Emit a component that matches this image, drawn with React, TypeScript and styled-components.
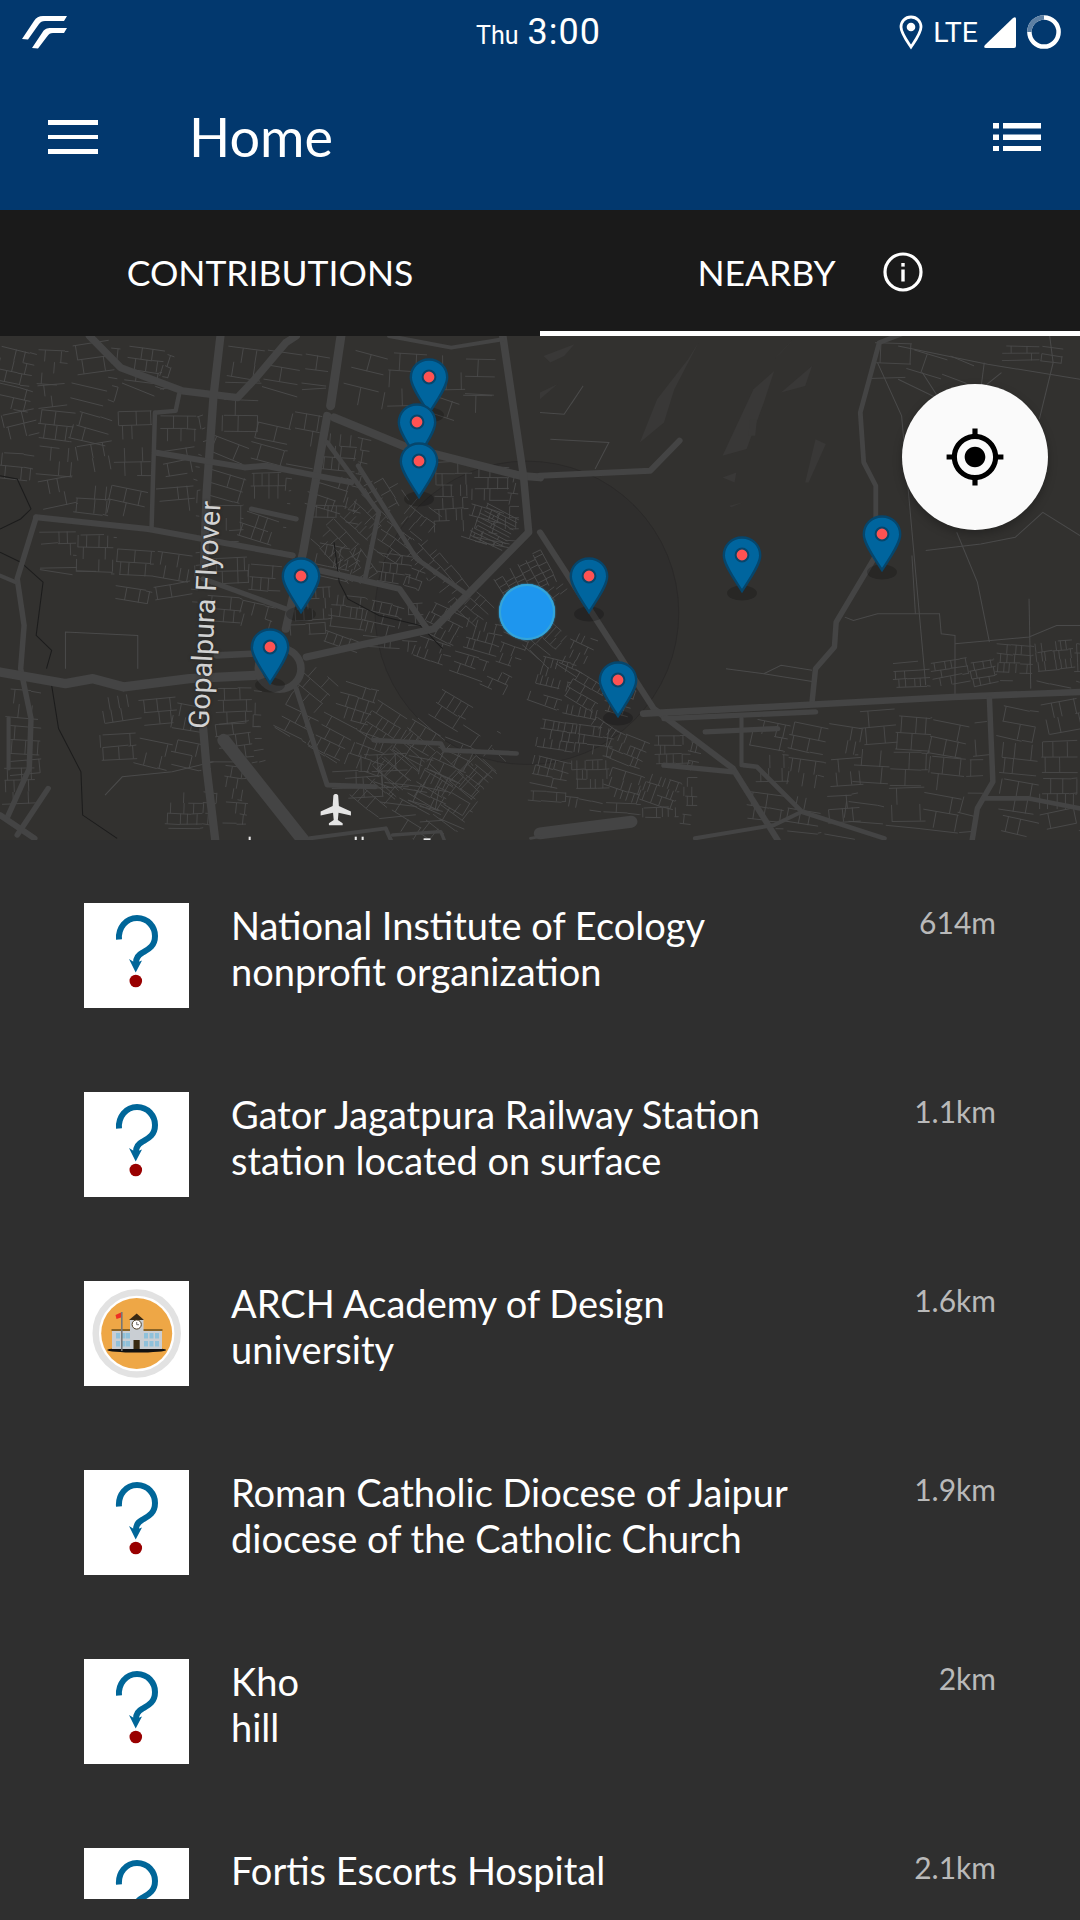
import React from "react"
import styled, { createGlobalStyle } from "styled-components"

const Global = createGlobalStyle`
  html, body { margin: 0; padding: 0; background: #2f2f2f; }
  body { font-family: Lato, Roboto, sans-serif; }
`

type Place = { name: string; kind?: string; dist: string; school?: boolean }

const places: Place[] = [
  { name: "National Institute of Ecology", kind: "nonprofit organization", dist: "614m" },
  { name: "Gator Jagatpura Railway Station", kind: "station located on surface", dist: "1.1km" },
  { name: "ARCH Academy of Design", kind: "university", dist: "1.6km", school: true },
  { name: "Roman Catholic Diocese of Jaipur", kind: "diocese of the Catholic Church", dist: "1.9km" },
  { name: "Kho", kind: "hill", dist: "2km" },
  { name: "Fortis Escorts Hospital", dist: "2.1km" },
]

// pin head centre x and top y, relative to the map
const pins = [
  { x: 429, y: 22 },
  { x: 417, y: 67 },
  { x: 419, y: 106 },
  { x: 301, y: 221 },
  { x: 270, y: 292 },
  { x: 589, y: 221 },
  { x: 618, y: 325 },
  { x: 742, y: 200 },
  { x: 882, y: 179 },
]

// map is drawn in zoom space: 2.904 units per px across, 3 per px down
const R = 1568
const mainRoads: [number, string][] = [
  [22, "260,0 350,95 530,165 690,185 740,130 830,20 860,0"],
  [24, "640,0 620,180 600,470 592,700"],
  [24, "590,1180 600,1300 625,1515"],
  [26, "990,0 960,210"],
  [24, "950,240 880,650 830,880"],
  [24, "970,245 1170,330 1510,420 1568,425"],
  [22, "1460,0 1520,420 1535,590 1260,880 890,965"],
  [12, "1130,0 1310,35 1460,10"],
  [18, "105,545 430,580 850,660"],
  [18, "930,705 1160,760 1240,880"],
  [18, "450,350 710,395 770,390 1020,440"],
  [13, "450,230 440,580"],
  [13, "520,175 510,225 455,230"],
  [14, "950,320 1100,530 1060,730"],
  [14, "1040,390 1210,670 1360,780"],
  [16, "105,545 50,730 70,870 60,1000 90,1150 85,1300 20,1450"],
  [28, "0,1010 190,1045 270,1030 360,1055 550,1030 740,1020"],
  [20, "630,960 730,955"],
  [15, "860,1060 950,1350 1090,1355"],
  [15, "590,730 830,820"],
  [12, "0,720 45,740"],
  [18, "0,1440 100,1510"],
  [38, "650,1215 880,1515"],
  [14, "1085,1215 1280,1225 1290,1245 1500,1255"],
  [15, "730,520 860,550"],
  [12, "900,1510 1120,1480 1135,1515"],
  [10, "1140,1500 1280,1490 1290,1515"],
  [12, "25,1150 25,1300"],
  [16, "140,1360 50,1500"],
  [18, `${R},420 ${R + 320},405 ${R + 405},315`],
  [18, `${R},590 ${R + 330},1120 ${R + 560},1300 ${R + 690},1515`],
  [14, `${R + 1060},-10 ${R + 985},20 ${R + 930},230 ${R + 940},380 ${R + 975},450 ${R + 975},560`],
  [16, `${R + 975},660 ${R + 860},860 ${R + 855},935 ${R + 800},1000 ${R + 790},1100`],
  [20, `${R + 300},1135 ${R + 1200},1085 ${R + 1568},1070`],
  [16, `${R + 360},1150 ${R + 800},1130`],
  [16, `${R + 480},1190 ${R + 690},1180`],
  [12, `${R + 585},1150 ${R + 585},1290`],
  [16, `${R + 360},1290 ${R + 560},1310`],
  [14, `${R + 590},1290 ${R + 630},1295 ${R + 760},1430 ${R + 1000},1510`],
  [16, `${R + 1305},1090 ${R + 1315},1340 ${R + 1270},1420 ${R + 1255},1515`],
  [14, `${R + 1290},1390 ${R + 1420},1390 ${R + 1568},1420`],
  [36, `${R},1495 ${R + 265},1460`],
  [12, `${R + 450},1510 ${R + 680},1470 ${R + 760},1430`],
  [8, "1540,1510 1568,1505"],
]

const rivers = [
  "0,420 50,430 90,520 60,550 0,580",
  "0,650 60,680 125,740 105,900 150,945 135,1000",
  "150,1050 170,1180 235,1310 240,1440 340,1510",
  "970,620 985,740 1010,790 1100,840 1220,870 1285,940",
]

const thinLines = [
  "190,890 190,1000 190,890 400,900 400,1000",
  "305,1380 355,1325 500,1310 620,1280",
  `${R},230 ${R + 70},235 ${R + 125},150 ${R + 90},205`,
  `${R + 30},310 ${R + 200},320 ${R + 160},400`,
  `${R + 540},1000 ${R + 650},1015 ${R + 700},990 ${R + 790},1005`,
  `${R + 650},1015 ${R + 800},1040`,
  `${R + 980},80 ${R + 1050},240 ${R + 1120},1050`,
  `${R + 1080},660 ${R + 1090},835 ${R + 1160},835 ${R + 1165},895 ${R + 1205},900 ${R + 1205},1080`,
  `${R + 885},845 ${R + 910},855 ${R + 980},835 ${R + 1090},835`,
  `${R + 1120},645 ${R + 1280},625 ${R + 1380},605 ${R + 1460},530 ${R + 1568},600`,
  `${R + 1040},30 ${R + 1300},85 ${R + 1568},130`,
  `${R + 1210},590 ${R + 1270},740 ${R + 1305},920`,
  `${R + 1420},790 ${R + 1425},1060`,
  `${R + 1480},0 ${R + 1490},80 ${R + 1450},250`,
  `${R + 1205},925 ${R + 1420},905 ${R + 1500},870 ${R + 1568},870`,
  `${R + 1110},110 ${R + 1160},190 ${R + 1040},130`,
  `${R + 1290},80 ${R + 1280},160 ${R + 1340},110`,
]

// x, y, width, height, angle, row step, cross step
const patches: number[][] = [
  [0, 30, 200, 180, 6, 34, 34], [210, 30, 140, 190, 3, 44, 52], [370, 30, 140, 125, 12, 34, 30],
  [660, 30, 300, 130, 6, 44, 60], [1020, 40, 420, 170, 5, 52, 64], [640, 190, 300, 170, 10, 48, 60],
  [460, 240, 130, 320, 2, 38, 36], [110, 220, 330, 320, 2, 42, 38], [0, 240, 100, 210, 0, 38, 36],
  [110, 590, 230, 140, 4, 36, 32], [340, 640, 240, 150, 3, 38, 36], [610, 400, 240, 240, 7, 38, 34],
  [610, 670, 210, 210, 8, 38, 32], [930, 290, 150, 290, 8, 36, 28], [920, 620, 140, 110, 8, 32, 26],
  [1130, 400, 210, 320, 48, 30, 24], [1260, 380, 260, 220, 6, 34, 26], [1230, 600, 300, 100, 48, 26, 20],
  [1410, 500, 110, 130, 20, 12, 60], [850, 760, 380, 170, 8, 32, 26], [1090, 650, 160, 110, 10, 28, 20],
  [1260, 800, 300, 180, 24, 30, 24], [900, 980, 640, 230, 30, 36, 28], [1280, 1060, 288, 430, 40, 42, 34],
  [960, 1260, 300, 100, 0, 50, 46], [20, 1060, 100, 300, 0, 42, 36], [290, 1090, 320, 220, 3, 38, 36],
  [620, 1060, 140, 240, 3, 36, 32], [480, 1370, 150, 130, 0, 32, 30], [650, 1290, 70, 190, 0, 32, 26],
  [1000, 1330, 300, 130, 6, 60, 70], [0, 1300, 100, 120, 0, 36, 36],
  [R, 640, 150, 180, 58, 26, 22], [R, 830, 190, 130, 30, 26, 22], [R, 960, 300, 140, 22, 28, 22],
  [R, 1150, 480, 260, 9, 28, 20], [R + 620, 1150, 320, 340, 4, 40, 36], [R + 920, 1130, 380, 340, 6, 50, 46],
  [R + 1020, 985, 300, 85, 0, 24, 24], [R + 1325, 925, 243, 135, 0, 28, 16], [R + 1340, 1110, 228, 380, 0, 46, 36],
  [R + 970, 20, 300, 130, 10, 60, 80], [R + 1340, 30, 180, 60, 0, 22, 70],
]

const hills = [
  `${R + 10},60 ${R + 100},25 ${R + 70},60 ${R + 30},80`,
  `${R + 290},320 ${R + 340},190 ${R + 430},70 ${R + 460},20 ${R + 390},160 ${R + 360},260`,
  `${R + 530},360 ${R + 620},160 ${R + 680},105 ${R + 650},200 ${R + 600},340`,
  `${R + 700},170 ${R + 790},90 ${R + 770},150`,
  `${R + 770},440 ${R + 800},310 ${R + 830},325 ${R + 780},440`,
  `${R + 680},70 ${R + 740},5 ${R + 700},50`,
  `${R},170 ${R + 50},145 ${R},190`,
  `${R + 530},425 ${R + 570},410 ${R + 565},440`,
  `${R + 550},510 ${R + 590},500 ${R + 555},515`,
  `${R + 610},250 ${R + 630},250 ${R + 625},300 ${R + 605},300`,
]

const makeRnd = (start: number) => {
  let seed = start * 97 + 13
  return () => {
    seed = (seed * 16807) % 2147483647
    return (seed % 1000) / 1000
  }
}

// one small block of lanes: broken rows with side lanes between them
const blockPath = (rnd: () => number, w: number, h: number, row: number, cross: number) => {
  let d = ""
  for (let y = 0; y <= h; y += row) {
    let x = rnd() * 14
    while (x < w) {
      const end = Math.min(w, x + cross * (1.5 + rnd() * 3))
      if (rnd() < 0.78) d += `M${x.toFixed(0)} ${y}L${end.toFixed(0)} ${(y + (rnd() - 0.5) * 6).toFixed(0)}`
      x = end
    }
    if (y + row <= h) {
      for (let c = rnd() * cross; c < w; c += cross * (0.6 + rnd() * 0.8)) {
        if (rnd() < 0.7) d += `M${c.toFixed(0)} ${y}V${y + row}`
      }
    }
  }
  return d
}

// patches are cut into small blocks, each turned a little, so the grid doesn't read as brickwork
const blocks = patches.flatMap(([x, y, w, h, a, row, cross], i) => {
  const rnd = makeRnd(i + 1)
  const out: { key: string; transform: string; d: string }[] = []
  const size = 110
  const rad = (a * Math.PI) / 180
  for (let v = 0; v < h; v += size) {
    for (let u = 0; u < w; u += size) {
      const bw = Math.min(size, w - u)
      const bh = Math.min(size, h - v)
      const px = x + u * Math.cos(rad) - v * Math.sin(rad)
      const py = y + u * Math.sin(rad) + v * Math.cos(rad)
      const turn = a + (rnd() - 0.5) * 26
      out.push({
        key: `${i}-${u}-${v}`,
        transform: `translate(${px.toFixed(0)} ${py.toFixed(0)}) rotate(${turn.toFixed(1)})`,
        d: blockPath(rnd, bw, bh, row, cross),
      })
    }
  }
  return out
})

const StreetMap = () => (
  <MapArt viewBox="0 0 3136 1515" preserveAspectRatio="none">
    <ellipse cx="1530" cy="832" rx="441" ry="456" fill="#2f2e2d" stroke="#282726" strokeWidth="2" />
    {hills.map((p, i) => (
      <polygon key={i} points={p} fill="#393837" />
    ))}
    {blocks.map(b => (
      <path key={b.key} transform={b.transform} d={b.d} fill="none" stroke="#4a4a4a" strokeWidth="2.6" />
    ))}
    {thinLines.map((p, i) => (
      <polyline key={i} points={p} fill="none" stroke="#4a4a4a" strokeWidth="3" />
    ))}
    {rivers.map((p, i) => (
      <polyline key={i} points={p} fill="none" stroke="#1c1c1c" strokeWidth="3" />
    ))}
    {mainRoads.map(([w, p], i) => (
      <polyline key={i} points={p} fill="none" stroke="#444" strokeWidth={w} strokeLinecap="round" strokeLinejoin="round" />
    ))}
    <circle cx="812" cy="1000" r="62" fill="#32312f" stroke="#444" strokeWidth="22" />
    <g transform="translate(975 1427)" fill="#e4e4e4">
      <path d="M-7 -46 C-3 -52 3 -52 7 -46 L9 -14 L44 2 L44 14 L8 6 L6 28 L20 38 L20 44 L-20 44 L-20 38 L-6 28 L-8 6 L-44 14 L-44 2 L-9 -14 Z" />
    </g>
    <g fill="#e8e8e8">
      <rect x="722" y="1505" width="6" height="10" />
      <rect x="1030" y="1505" width="6" height="10" />
      <rect x="1050" y="1505" width="6" height="10" />
      <rect x="1230" y="1510" width="20" height="5" />
    </g>
  </MapArt>
)

const Pin = ({ x, y }: { x: number; y: number }) => (
  <PinMark style={{ left: x - 20, top: y }} viewBox="0 0 40 66" width="40" height="66">
    <ellipse cx="20" cy="57" rx="15" ry="7.500" fill="#000" opacity=".2" />
    <path
      d="M20 1.5 C9.5 1.5 1.8 9.5 1.8 19.5 C1.8 29 13 44 20 55 C27 44 38.2 29 38.2 19.5 C38.2 9.5 30.5 1.5 20 1.5 Z"
      fill="#00659e"
      stroke="#06466c"
      strokeWidth="2.4"
    />
    <circle cx="20" cy="19" r="6.4" fill="#ff5252" stroke="#06466c" strokeWidth="2" />
  </PinMark>
)

const UnknownIcon = () => (
  <svg viewBox="0 0 105 105" width="105" height="105">
    <path
      d="M35 36.5 C34 25 42 15 53 15 C64 15 71 24 71 33 C71 44 63 47 58 50 C54 52 52 55 52 60"
      fill="none"
      stroke="#006699"
      strokeWidth="6"
    />
    <path d="M45 56 L51.5 60 L58 57.5 L51.7 69.5 Z" fill="#006699" />
    <circle cx="51.8" cy="78" r="6.3" fill="#990000" />
  </svg>
)

const SchoolIcon = () => (
  <svg viewBox="0 0 105 105" width="105" height="105">
    <circle cx="52.7" cy="52.5" r="41" fill="none" stroke="#e2e2e2" strokeWidth="6.5" />
    <circle cx="52.7" cy="52.5" r="35.5" fill="#eea746" />
    <ellipse cx="52.7" cy="69" rx="29.5" ry="2.6" fill="#111" />
    <rect x="28" y="49" width="50" height="19" fill="#c9ced3" />
    <rect x="27.5" y="48" width="51" height="2" fill="#8a6426" />
    <rect x="46" y="38" width="13.5" height="30" fill="#c9ced3" />
    <path d="M45 39 L52.7 32.5 L60 39 Z" fill="#3a2a14" />
    <circle cx="52.7" cy="43.5" r="4.6" fill="#fff" stroke="#4a3a20" strokeWidth="1" />
    <path d="M52.7 41 V43.7 H55" fill="none" stroke="#333" strokeWidth=".7" />
    <rect x="49.5" y="59" width="6.2" height="9" fill="#3a2a10" />
    {[32, 37.5, 42].map(x =>
      [52, 60].map(y => <rect key={`${x}-${y}`} x={x} y={y} width="4" height="5.5" fill="#8fc1da" />)
    )}
    {[60, 65.5, 71].map(x =>
      [52, 60].map(y => <rect key={`${x}-${y}`} x={x} y={y} width="4" height="5.5" fill="#8fc1da" />)
    )}
    <rect x="37" y="31" width="1.6" height="39" fill="#777" />
    <path d="M31.5 34 L37 31.5 V36.5 L32.5 38 Z" fill="#ee2e24" />
  </svg>
)

export default function App() {
  return (
    <>
      <Global />
      <Page>
        <AppBar>
          <StatusBar>
            <svg viewBox="0 0 46 34" width="46" height="34">
              <path
                d="M0 24 L12 6 C14 2.5 17 1 21 1 H45 L42 6 H23 C20 6 18.5 7 17 9 L6 24.5 Z M10 33 L20 18 C22 14 25 13 29 13 H45 L42 18 H31 C28 18 27 19 25.500 21 L16 33.500 Z"
                fill="#fff"
              />
            </svg>
            <Clock>
              <Day>Thu</Day>
              <Time>3:00</Time>
            </Clock>
            <StatusIcons>
              <svg viewBox="0 0 24 35" width="24" height="35">
                <path
                  d="M12 2 C6 2 2 6.500 2 12 C2 18 8 26 12 32 C16 26 22 18 22 12 C22 6.500 18 2 12 2 Z"
                  fill="none"
                  stroke="#fff"
                  strokeWidth="2.8"
                />
                <circle cx="12" cy="12" r="4.300" fill="#fff" />
              </svg>
              <Lte>LTE</Lte>
              <svg viewBox="0 0 32 32" width="32" height="32">
                <path d="M1 29 L29 2 Q32 0 32 3 V30 Q32 32 30 32 H2 Q-1 32 1 29 Z" fill="#fff" />
              </svg>
              <svg viewBox="0 0 36 36" width="36" height="36">
                <circle cx="18" cy="18" r="14.600" fill="none" stroke="#fff" strokeWidth="4.500" />
                <path d="M18 3.400 A14.600 14.600 0 0 0 3.400 18" fill="none" stroke="#5c7fa3" strokeWidth="4.500" />
              </svg>
            </StatusIcons>
          </StatusBar>
          <Toolbar>
            <Burger>
              <i />
              <i />
              <i />
            </Burger>
            <Title>Home</Title>
            <svg viewBox="0 0 48 28" width="48" height="28">
              <path
                d="M0 0 H6 V5.500 H0 Z M0 11.500 H6 V17 H0 Z M0 23 H6 V28.500 H0 Z M10 0 H48 V5.500 H10 Z M10 11.500 H48 V17 H10 Z M10 23 H48 V28.500 H10 Z"
                fill="#fff"
              />
            </svg>
          </Toolbar>
        </AppBar>
        <Tabs>
          <Tab>CONTRIBUTIONS</Tab>
          <Tab $active>
            NEARBY
            <svg viewBox="0 0 40 40" width="40" height="40">
              <circle cx="20" cy="20" r="18" fill="none" stroke="#fff" strokeWidth="3.200" />
              <rect x="18.300" y="17.500" width="3.400" height="12" fill="#fff" />
              <rect x="18.300" y="11" width="3.400" height="3.600" fill="#fff" />
            </svg>
          </Tab>
        </Tabs>
        <MapPane>
          <StreetMap />
          <RoadLabel>Gopalpura Flyover</RoadLabel>
          <AccuracyDot />
          {pins.map((p, i) => (
            <Pin key={i} x={p.x} y={p.y} />
          ))}
          <LocateButton>
            <svg viewBox="0 0 24 24" width="62" height="62">
              <path d="M12 8c-2.210 0-4 1.790-4 4s1.790 4 4 4 4-1.790 4-4-1.790-4-4-4zm8.940 3c-.460-4.170-3.770-7.480-7.940-7.940V1h-2v2.060C6.830 3.520 3.520 6.830 3.060 11H1v2h2.060c.460 4.170 3.770 7.480 7.940 7.940V23h2v-2.060c4.170-.460 7.480-3.770 7.940-7.940H23v-2h-2.060zM12 19c-3.870 0-7-3.130-7-7s3.130-7 7-7 7 3.130 7 7-3.130 7-7 7z" />
            </svg>
          </LocateButton>
        </MapPane>
        <List>
          {places.map(p => (
            <Row key={p.name}>
              <Thumb>{p.school ? <SchoolIcon /> : <UnknownIcon />}</Thumb>
              <Info>
                <div>{p.name}</div>
                {p.kind && <div>{p.kind}</div>}
              </Info>
              <Distance>{p.dist}</Distance>
            </Row>
          ))}
        </List>
      </Page>
    </>
  )
}

const Page = styled.div`
  width: 1080px;
  height: 1920px;
  overflow: hidden;
  background: #2f2f2f;
  color: #fff;
`
const AppBar = styled.header`
  height: 210px;
  background: #02386e;
`
const StatusBar = styled.div`
  position: relative;
  height: 64px;
  padding: 0 18px 0 22px;
  display: flex;
  align-items: center;
  justify-content: space-between;
`
const Clock = styled.div`
  position: absolute;
  left: 476px;
  top: 11px;
  display: flex;
  align-items: baseline;
  gap: 9px;
  font-family: Roboto, sans-serif;
`
const Day = styled.span`
  font-size: 25px;
`
const Time = styled.span`
  font-size: 36px;
  letter-spacing: 1px;
`
const StatusIcons = styled.div`
  display: flex;
  align-items: center;
  gap: 10px;
`
const Lte = styled.span`
  font-family: Roboto, sans-serif;
  font-size: 28.500px;
  margin-right: -4px;
`
const Toolbar = styled.div`
  height: 146px;
  padding: 0 39px 0 48px;
  display: flex;
  align-items: center;
`
const Burger = styled.div`
  width: 50px;
  display: flex;
  flex-direction: column;
  gap: 10px;
  i {
    display: block;
    height: 4.500px;
    background: #fff;
  }
`
const Title = styled.h1`
  flex: 1;
  margin: -2px 0 0 91px;
  font-size: 54px;
  font-weight: 400;
`
const Tabs = styled.nav`
  height: 126px;
  display: grid;
  grid-template-columns: 1fr 1fr;
  background: #1a1a1a;
`
const Tab = styled.div<{ $active?: boolean }>`
  display: flex;
  align-items: center;
  justify-content: center;
  gap: 47px;
  padding-top: 3px;
  font-size: 35.500px;
  box-sizing: border-box;
  border-bottom: 5px solid ${p => (p.$active ? "#fff" : "transparent")};
`
const MapPane = styled.section`
  position: relative;
  height: 504px;
  overflow: hidden;
  background: #32312f;
`
const MapArt = styled.svg`
  display: block;
  width: 1080px;
  height: 504px;
`
const PinMark = styled.svg`
  position: absolute;
`
const RoadLabel = styled.span`
  position: absolute;
  left: 205px;
  top: 279px;
  transform: translate(-50%, -50%) rotate(-87deg);
  font-family: Roboto, sans-serif;
  font-size: 28.500px;
  white-space: nowrap;
  color: #d2d2d2;
  text-shadow: 0 0 3px #222;
`
const AccuracyDot = styled.div`
  position: absolute;
  left: 499px;
  top: 248px;
  width: 56px;
  height: 56px;
  border-radius: 50%;
  background: #1e96ee;
  box-shadow: inset 0 0 0 2px #35a5d8, 0 0 2px #35a5d8;
`
const LocateButton = styled.button`
  position: absolute;
  left: 902px;
  top: 48px;
  width: 146px;
  height: 146px;
  padding: 0;
  border: 0;
  border-radius: 50%;
  background: #fafafa;
  box-shadow: 0 4px 10px rgba(0, 0, 0, 0.25);
  display: flex;
  align-items: center;
  justify-content: center;
`
const List = styled.ul`
  height: 1038px;
  margin: 0;
  padding: 21px 0 0;
  list-style: none;
  overflow: hidden;
`
const Row = styled.li`
  height: 105px;
  padding: 42px 84px;
  display: flex;
  gap: 42px;
`
const Thumb = styled.div`
  flex: none;
  width: 105px;
  height: 105px;
  background: #fff;
  svg {
    display: block;
  }
`
const Info = styled.div`
  flex: 1;
  margin-top: -1px;
  font-size: 38px;
  line-height: 46px;
  white-space: nowrap;
`
const Distance = styled.div`
  margin-top: -1px;
  font-size: 30px;
  line-height: 40px;
  color: #b9b9b9;
`
